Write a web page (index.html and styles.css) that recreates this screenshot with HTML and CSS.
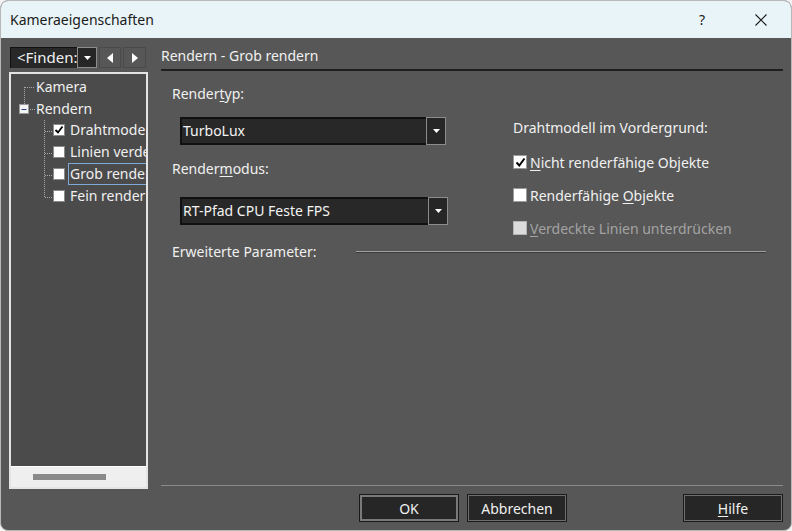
FILE: index.html
```html
<!DOCTYPE html>
<html lang="de">
<head>
<meta charset="utf-8">
<title>Kameraeigenschaften</title>
<link rel="stylesheet" href="styles.css">
</head>
<body>
<div class="window">
  <div class="titlebar">
    <span class="title">Kameraeigenschaften</span>
    <span class="help">?</span>
    <svg class="close" width="12" height="12" viewBox="0 0 12 12"><path d="M0.5 0.5 L11.5 11.5 M11.5 0.5 L0.5 11.5" stroke="#1b1b1b" stroke-width="1.1" fill="none"/></svg>
  </div>
  <div class="body">
    <div class="left">
      <div class="finder">
        <div class="find-box">&lt;Finden:</div>
        <div class="find-drop"><svg width="7" height="4" viewBox="0 0 7 4"><path d="M0 0 H7 L3.5 4 Z" fill="#fff"/></svg></div>
        <div class="nav-btn"><svg width="6" height="10" viewBox="0 0 6 10"><path d="M6 0 V10 L0 5 Z" fill="#fff"/></svg></div>
        <div class="nav-btn"><svg width="6" height="10" viewBox="0 0 6 10"><path d="M0 0 V10 L6 5 Z" fill="#fff"/></svg></div>
      </div>
      <div class="tree">
        <div class="tree-inner">
          <svg class="tree-lines" width="60" height="140" viewBox="0 0 60 140">
            <g stroke="#a8a8a8" stroke-width="1" stroke-dasharray="1 1" fill="none">
              <path d="M13.5 13 V30"/>
              <path d="M14 13.5 H24"/>
              <path d="M19 35.5 H24"/>
              <path d="M33.5 46 V123"/>
              <path d="M34 57.5 H42"/>
              <path d="M34 79.5 H42"/>
              <path d="M34 101.5 H42"/>
              <path d="M34 123.5 H42"/>
            </g>
            <rect x="8.5" y="30.5" width="9" height="9" fill="#f4f4f4" stroke="#9a9a9a"/>
            <path d="M10.5 35.5 H15.5" stroke="#2a3f8f" stroke-width="1"/>
          </svg>
          <div class="row top">Kamera</div>
          <div class="row top">Rendern</div>
          <div class="row child"><span class="tcb"><svg width="10" height="10" viewBox="0 0 10 10"><path d="M1.5 5 L4 7.5 L8.5 1.5" stroke="#000" stroke-width="1.8" fill="none"/></svg></span><span class="tlabel">Drahtmodell</span></div>
          <div class="row child"><span class="tcb"></span><span class="tlabel">Linien verdeckt</span></div>
          <div class="row child"><span class="tcb"></span><span class="tlabel focus">Grob rendern</span></div>
          <div class="row child"><span class="tcb"></span><span class="tlabel">Fein rendern</span></div>
        </div>
        <div class="hscroll"><div class="thumb"></div></div>
      </div>
    </div>
    <div class="right">
      <div class="header">Rendern - Grob rendern</div>
      <div class="content">
        <div class="col-a">
          <div class="label first">Render<u>t</u>yp:</div>
          <div class="combo c1">
            <div class="combo-text">TurboLux</div>
            <div class="combo-btn"><svg width="7" height="4" viewBox="0 0 7 4"><path d="M0 0 H7 L3.5 4 Z" fill="#fff"/></svg></div>
          </div>
          <div class="label second">Render<u>m</u>odus:</div>
          <div class="combo c2">
            <div class="combo-text">RT-Pfad CPU Feste FPS</div>
            <div class="combo-btn"><svg width="7" height="4" viewBox="0 0 7 4"><path d="M0 0 H7 L3.5 4 Z" fill="#fff"/></svg></div>
          </div>
        </div>
        <div class="col-b">
          <div class="label group">Drahtmodell im Vordergrund:</div>
          <div class="check first-check"><span class="cb"><svg width="11" height="11" viewBox="0 0 11 11"><path d="M1.5 5.5 L4.3 8.5 L9.5 1.5" stroke="#000" stroke-width="2" fill="none"/></svg></span><span><u>N</u>icht renderfähige Objekte</span></div>
          <div class="check"><span class="cb"></span><span>Renderfähige <u>O</u>bjekte</span></div>
          <div class="check disabled"><span class="cb"></span><span><u>V</u>erdeckte Linien unterdrücken</span></div>
        </div>
      </div>
      <div class="params">
        <span class="params-label">Erweiterte Parameter:</span>
        <span class="params-line"></span>
      </div>
      <div class="spacer"></div>
      <div class="footer">
        <button class="btn default">OK</button>
        <button class="btn">Abbrechen</button>
        <button class="btn help-btn"><u>H</u>ilfe</button>
      </div>
    </div>
  </div>
</div>
</body>
</html>
```

FILE: styles.css
```css
* { box-sizing: border-box; }
html, body { margin: 0; padding: 0; background: #f3f3f3; }
body { font-family: "Noto Sans", "Open Sans", sans-serif; font-size: 14px; }
u { text-decoration-thickness: 1px; text-underline-offset: 2px; }

.window {
  width: 792px; height: 531px;
  border: 1px solid #b8b8b8;
  border-radius: 8px;
  overflow: hidden;
  display: flex; flex-direction: column;
  background: #575757;
}

.titlebar {
  height: 37px; flex: none;
  background: #e9f4f8;
  display: flex; align-items: center;
  padding-left: 9px;
  color: #1a1a1a; font-size: 14px;
}
.title { flex: 1; }
.help { width: 10px; margin-right: 46px; font-size: 14px; }
.close { margin-right: 24px; }

.body {
  flex: 1;
  display: flex;
  padding: 9px 8px 0 8px;
  gap: 12px;
  color: #f0f0f0;
}

.left { width: 140px; flex: none; display: flex; flex-direction: column; }
.finder { display: flex; height: 21px; margin-left: 1px; }
.find-box {
  width: 67px; height: 21px;
  background: #282828;
  border-top: 1px solid #111; border-left: 1px solid #111;
  padding-left: 6px; line-height: 19px; font-size: 15px;
  overflow: hidden; white-space: nowrap;
}
.find-drop {
  width: 20px; height: 21px;
  border: 1px solid #8c8c8c; background: #262626;
  display: flex; align-items: center; justify-content: center;
}
.nav-btn {
  width: 22px; height: 21px; margin-left: 2px;
  border: 1px solid #4a4a4a; background: #575757;
  display: flex; align-items: center; justify-content: center;
}
.nav-btn + .nav-btn { width: 23px; }

.tree {
  margin-top: 4px;
  width: 139px; height: 417px;
  border: 2px solid #e4e4e4;
  display: flex; flex-direction: column;
  background: #4b4b4b;
}
.tree-inner { flex: 1; position: relative; overflow: hidden; padding-top: 1px; }
.tree-lines { position: absolute; left: 0; top: 0; }
.row { height: 22px; display: flex; align-items: center; white-space: nowrap; }
.row.top { padding-left: 25px; }
.row.child { padding-left: 42px; }
.tcb {
  width: 12px; height: 12px; flex: none;
  background: #fff; border: 1px solid #8a8a8a;
  display: flex; align-items: center; justify-content: center;
  margin-right: 3px;
}
.tlabel { padding: 0 1px; border: 1px solid transparent; line-height: 20px; }
.tlabel.focus { border-color: #7ea9d6; }
.hscroll { height: 21px; flex: none; background: #efefef; border-top: 1px solid #fff; padding: 7px 0 0 22px; }
.thumb { width: 73px; height: 6px; background: #8a8a8a; }

.right { width: 622px; flex: none; display: flex; flex-direction: column; }
.header {
  height: 24px; line-height: 18px; padding-left: 0;
  border-bottom: 2px solid #1f1f1f;
  color: #f0f0f0;
}
.content { display: flex; }
.col-a { width: 352px; padding-left: 11px; flex: none; }
.label { line-height: 18px; white-space: nowrap; }
.label.first { margin-top: 14px; }
.label.second { margin-top: 15px; }
.combo { display: flex; height: 28px; margin-left: 8px; margin-top: 14px; }
.combo.c1 { width: 266px; }
.combo.c2 { width: 268px; margin-top: 19px; }
.combo-text {
  flex: 1; background: #282828;
  border: 2px solid #111; border-right: none;
  padding-left: 1px; line-height: 24px; color: #f4f4f4;
}
.combo-btn {
  width: 20px; flex: none;
  border: 1px solid #8c8c8c; background: #262626;
  display: flex; align-items: center; justify-content: center;
}

.col-b { flex: 1; }
.label.group { margin-top: 48px; }
.check { display: flex; align-items: center; height: 18px; margin-top: 15px; white-space: nowrap; }
.check.first-check { margin-top: 16px; }
.cb {
  width: 14px; height: 14px; flex: none; margin-right: 3px;
  background: #fff; border: 1px solid #9a9a9a;
  display: flex; align-items: center; justify-content: center;
}
.check.disabled { color: #a3a3a3; }
.check.disabled .cb { background: #dcdcdc; border-color: #b4b4b4; }

.params { display: flex; align-items: center; padding-left: 11px; margin-top: 5px; height: 18px; }
.params-label { width: 184px; flex: none; }
.params-line { width: 410px; height: 2px; border-top: 1px solid #a0a0a0; border-bottom: 1px solid #3a3a3a; margin-top: 2px; }

.spacer { flex: 1; }
.footer {
  border-top: 1px solid #8a8a8a;
  display: flex;
  padding: 8px 0 8px 0;
}
.btn {
  width: 100px; height: 28px;
  background: #262626; color: #f0f0f0;
  font-family: inherit; font-size: 14px;
  border: 1px solid #1a1a1a;
  box-shadow: inset 0 0 0 1px #6e6e6e;
  padding: 0;
}
.btn.default { margin-left: 198px; box-shadow: inset 0 0 0 2px #7a7a7a; }
.btn + .btn { margin-left: 8px; }
.btn.help-btn { margin-left: auto; }
```
